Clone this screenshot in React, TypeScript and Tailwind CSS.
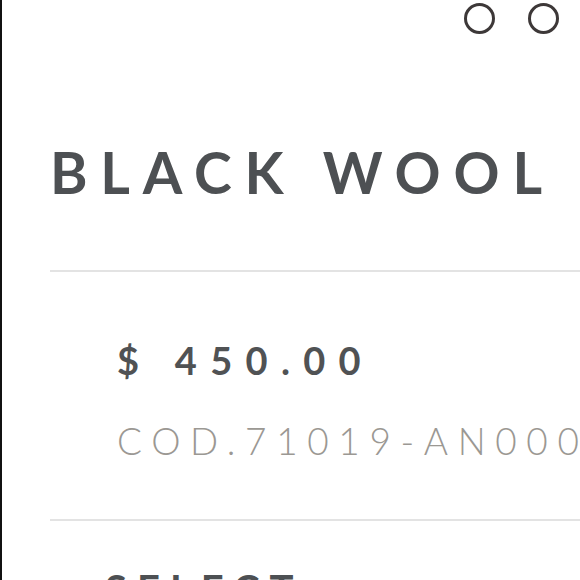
import React from "react";

export default function App() {
  return (
    <div
      className="relative h-[580px] w-[580px] overflow-hidden border-l-2 border-[#111111] bg-white"
      style={{ fontFamily: "Lato, 'Open Sans', sans-serif" }}
    >
      <div className="flex justify-end gap-[33px] pr-[21px] pt-[3px]">
        <span className="block h-[31px] w-[31px] rounded-full border-[3px] border-[#3d3838]" />
        <span className="block h-[31px] w-[31px] rounded-full border-[3px] border-[#3d3838]" />
      </div>
      <div className="pl-[48px]">
        <h1 className="mt-[110px] whitespace-nowrap text-[57px] font-bold leading-[57px] tracking-[0.225em] text-[#4d5053]">
          BLACK WOOL
        </h1>
        <div className="mt-[69px] h-[2px] w-full bg-[#e3e3e3]" />
        <div className="pl-[67px]">
          <div className="mt-[69px] whitespace-nowrap text-[38px] font-bold leading-[38px] tracking-[0.35em] text-[#505254]">
            $ 450.00
          </div>
          <div className="mt-[43px] whitespace-nowrap text-[37px] font-light leading-[37px] tracking-[0.26em] text-[#9b9893]">
            COD.71019-AN000
          </div>
        </div>
        <div className="mt-[60px] h-[2px] w-full bg-[#e3e3e3]" />
        <div className="mt-[44px] pl-[55px] whitespace-nowrap text-[40px] font-bold leading-[48px] tracking-[0.25em] text-[#4d5053]">
          SELECT
        </div>
      </div>
    </div>
  );
}
